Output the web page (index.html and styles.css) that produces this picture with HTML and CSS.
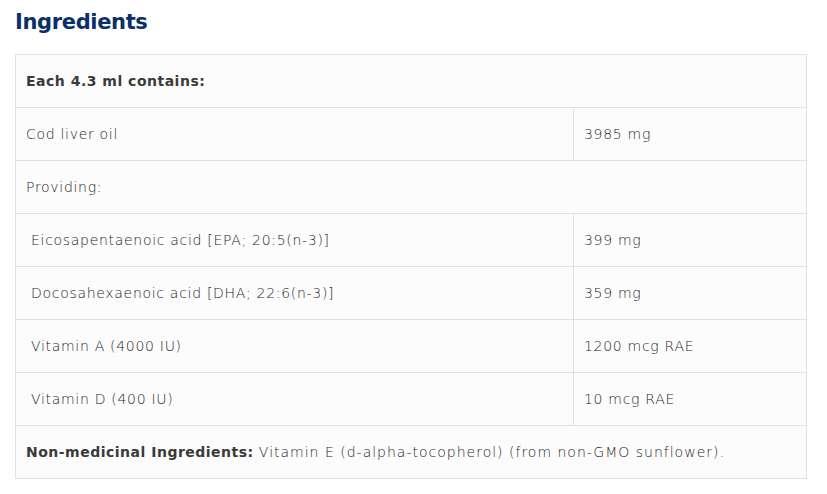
FILE: index.html
```html
<!DOCTYPE html>
<html lang="en">
<head>
<meta charset="utf-8">
<title>Ingredients</title>
<link rel="stylesheet" href="styles.css">
</head>
<body>
<section class="ingredients">
  <h2 class="title">Ingredients</h2>
  <table class="ing-table">
    <tbody>
      <tr><td class="cell head" colspan="2">Each 4.3 ml contains:</td></tr>
      <tr><td class="cell name">Cod liver oil</td><td class="cell val">3985 mg</td></tr>
      <tr><td class="cell" colspan="2">Providing:</td></tr>
      <tr><td class="cell name sub">Eicosapentaenoic acid [EPA; 20:5(n-3)]</td><td class="cell val">399 mg</td></tr>
      <tr><td class="cell name sub">Docosahexaenoic acid [DHA; 22:6(n-3)]</td><td class="cell val">359 mg</td></tr>
      <tr><td class="cell name sub">Vitamin A (4000 IU)</td><td class="cell val">1200 mcg RAE</td></tr>
      <tr><td class="cell name sub">Vitamin D (400 IU)</td><td class="cell val">10 mcg RAE</td></tr>
      <tr><td class="cell" colspan="2"><strong class="strong">Non-medicinal Ingredients:</strong> <span class="note">Vitamin E (d-alpha-tocopherol) (from non-GMO sunflower).</span></td></tr>
    </tbody>
  </table>
</section>
</body>
</html>
```
FILE: styles.css
```css
html, body {
  margin: 0;
  padding: 0;
  background: #ffffff;
}
body {
  font-family: "DejaVu Sans", sans-serif;
  color: #1f1f1f;
}
.ingredients {
  padding: 0 20px 0 15px;
}
.title {
  margin: 0;
  padding-top: 8px;
  height: 54px;
  box-sizing: border-box;
  font-size: 21px;
  line-height: 28px;
  font-weight: 700;
  letter-spacing: -0.35px;
  color: #0b2f6b;
}
.ing-table {
  width: 792px;
  border-collapse: collapse;
  background: #fcfcfc;
  font-size: 14px;
  font-weight: 200;
  letter-spacing: 0.7px;
}
.cell {
  border: 1px solid #e1e1e1;
  height: 53px;
  box-sizing: border-box;
  padding: 0 10px;
  vertical-align: middle;
  line-height: 20px;
}
.name {
  width: 558px;
}
.sub {
  padding-left: 15px;
}
.head, .strong {
  font-weight: 700;
  color: #3a3a3a;
  letter-spacing: 0.5px;
}
.note {
  letter-spacing: 1px;
}
```
